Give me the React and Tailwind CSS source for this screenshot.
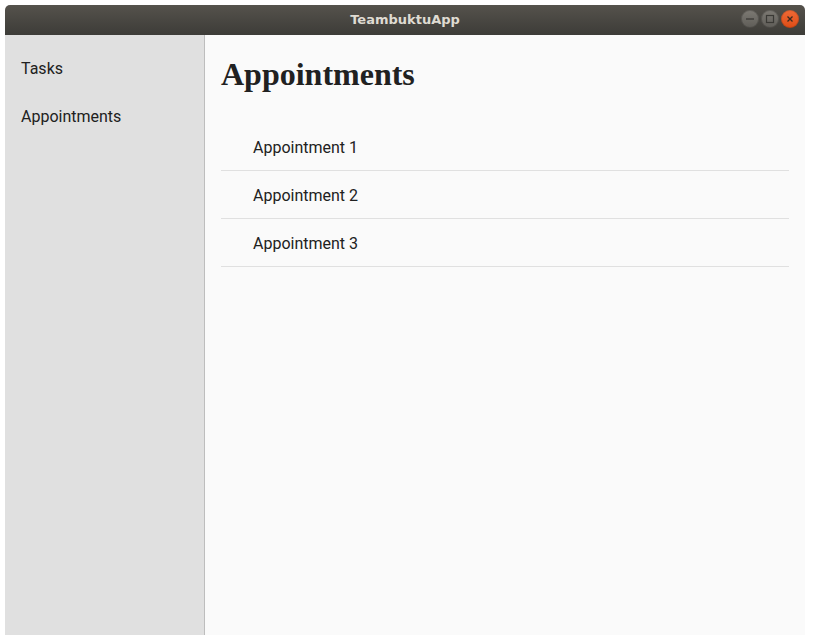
const appointments = ["Appointment 1", "Appointment 2", "Appointment 3"]

function WindowButton({ kind }) {
  if (kind === "close") {
    return (
      <div className="flex h-[18px] w-[18px] items-center justify-center rounded-full bg-gradient-to-b from-[#f06a35] to-[#de4c15] shadow-[inset_0_0_0_1px_rgba(0,0,0,0.15)]">
        <svg width="10" height="10" viewBox="0 0 10 10">
          <path d="M2.5 2.5 L7.5 7.5 M7.5 2.5 L2.5 7.5" stroke="#3a2a20" strokeWidth="1.3" />
        </svg>
      </div>
    )
  }
  return (
    <div className="flex h-[18px] w-[18px] items-center justify-center rounded-full bg-gradient-to-b from-[#7d7a74] to-[#5e5c57] shadow-[inset_0_0_0_1px_rgba(0,0,0,0.2)]">
      <svg width="10" height="10" viewBox="0 0 10 10">
        {kind === "min" ? (
          <path d="M1 5 H9" stroke="#3a3935" strokeWidth="1.3" />
        ) : (
          <rect x="1.5" y="1.5" width="7" height="7" fill="none" stroke="#3a3935" strokeWidth="1.2" />
        )}
      </svg>
    </div>
  )
}

export default function App() {
  return (
    <div className="h-[644px] w-[814px] bg-white p-[5px] font-['Roboto',sans-serif]">
      <div className="flex h-[630px] w-[800px] flex-col">
        <div className="relative flex h-[30px] items-center justify-center rounded-t-[5px] bg-gradient-to-b from-[#55524c] to-[#3d3c38]">
          <span className="font-['DejaVu_Sans',sans-serif] text-[13px] font-bold text-[#dfdbd2]">
            TeambuktuApp
          </span>
          <div className="absolute right-[6px] top-[5px] flex gap-[2px]">
            <WindowButton kind="min" />
            <WindowButton kind="max" />
            <WindowButton kind="close" />
          </div>
        </div>

        <div className="flex flex-1">
          <nav className="w-[200px] border-r border-[#bdbdbd] bg-[#e0e0e0] pt-[10px]">
            <div className="flex h-12 items-center px-4 text-base text-[#212121]">Tasks</div>
            <div className="flex h-12 items-center px-4 text-base text-[#212121]">Appointments</div>
          </nav>

          <main className="flex-1 bg-[#fafafa] px-4">
            <h1 className="mt-[17px] mb-[27px] font-['Liberation_Serif',serif] text-[32px] font-bold leading-[44px] text-[#212121]">
              Appointments
            </h1>
            <div>
              {appointments.map((a) => (
                <div
                  key={a}
                  className="flex h-12 items-center border-b border-[#e0e0e0] pl-8 pt-[2px] text-base text-[#212121]"
                >
                  {a}
                </div>
              ))}
            </div>
          </main>
        </div>
      </div>
    </div>
  )
}
